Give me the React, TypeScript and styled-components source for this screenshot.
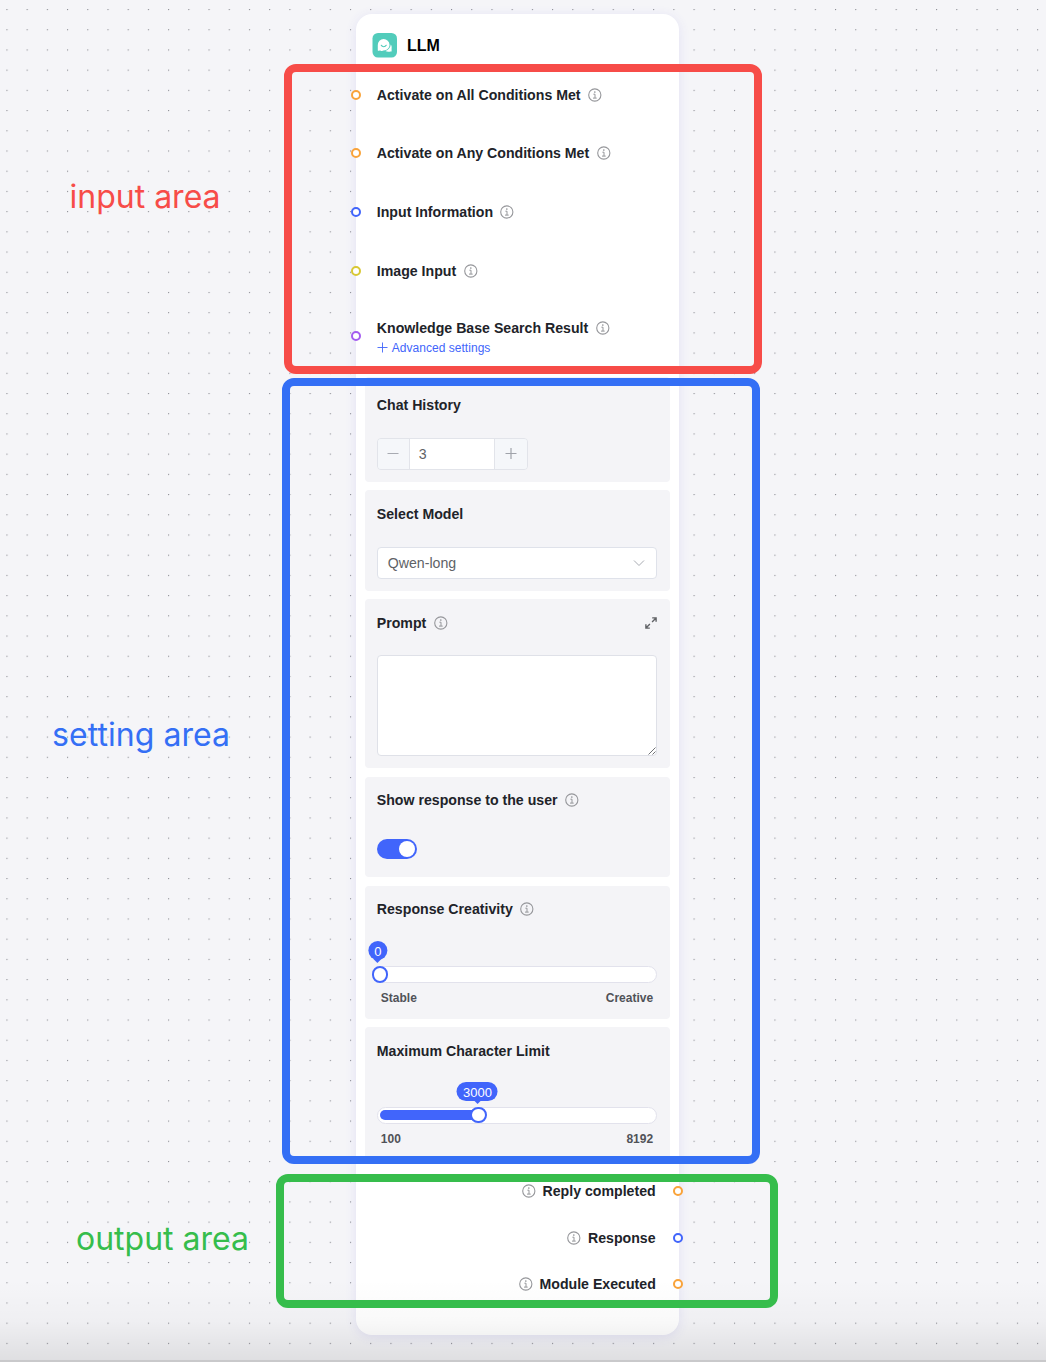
import React from "react";
import styled, { createGlobalStyle } from "styled-components";

const blue = "#4165fb";

const GlobalStyle = createGlobalStyle`
  * { box-sizing: border-box; }
  body { margin: 0; background: #f5f5f8; font-family: "Liberation Sans", Arial, sans-serif; }
`;

const Canvas = styled.main`
  position: relative;
  width: 1046px;
  height: 1362px;
  overflow: hidden;
  background: #f5f5f8;
  padding: 14px 0 0 356px;
`;

const Dots = styled.svg`
  position: absolute;
  inset: 0;
  width: 100%;
  height: 100%;
`;

const BottomShade = styled.div`
  position: absolute;
  left: 0;
  right: 0;
  bottom: 0;
  height: 82px;
  border-bottom: 2px solid #c9c9cb;
  background: linear-gradient(to bottom, rgba(0,0,0,0), rgba(0,0,0,0.025) 50%, rgba(0,0,0,0.09));
`;

const Node = styled.section`
  position: relative;
  width: 323px;
  height: 1321px;
  background: #fff;
  border-radius: 16px;
  box-shadow: 0 2px 12px rgba(85, 72, 220, 0.11);
  display: flex;
  flex-direction: column;
`;

const Header = styled.header`
  display: flex;
  align-items: center;
  gap: 10px;
  height: 63px;
  padding-left: 16px;
  font-size: 16px;
  font-weight: 700;
  color: #000;
`;

const Inputs = styled.div`
  height: 300px;
  padding-top: 5.4px;
`;

const InputRow = styled.div<{ $h?: number }>`
  display: flex;
  align-items: center;
  height: ${(p) => p.$h ?? 25}px;
  margin-bottom: 33.6px;
`;

const Port = styled.span<{ $color: string }>`
  flex: none;
  width: 10px;
  height: 10px;
  border: 2px solid ${(p) => p.$color};
  border-radius: 50%;
  background: #fff;
`;

const InPort = styled(Port)`
  margin-left: -4.6px;
  margin-right: 15.4px;
`;

const OutPort = styled(Port)`
  margin-left: 10px;
  margin-right: -4px;
`;

const Title = styled.div`
  display: flex;
  align-items: center;
  height: 20px;
  font-size: 14.15px;
  font-weight: 700;
  color: #212329;
  white-space: nowrap;
`;

const TitleText = styled.span<{ $w: number }>`
  width: ${(p) => p.$w}px;
`;

const Stack = styled.div`
  display: flex;
  flex-direction: column;
  padding-top: 3px;
`;

const Advanced = styled.a`
  display: flex;
  align-items: center;
  gap: 4px;
  height: 19px;
  font-size: 12px;
  letter-spacing: 0.03px;
  color: ${blue};
`;

const Settings = styled.div`
  display: flex;
  flex-direction: column;
  gap: 8.5px;
  padding: 0 9.5px 0 8.8px;
`;

const Card = styled.div<{ $h: number; $top?: number }>`
  height: ${(p) => p.$h}px;
  background: #f4f4f7;
  border-radius: 4px;
  padding: ${(p) => p.$top ?? 13.6}px 12.4px 0 12px;
`;

const Spread = styled.div`
  display: flex;
  align-items: center;
  justify-content: space-between;
`;

const Stepper = styled.div`
  display: grid;
  grid-template-columns: 31px 1fr 32px;
  width: 151px;
  height: 32px;
  margin-top: 22.5px;
  border: 1px solid #e2e4ea;
  border-radius: 4px;
  overflow: hidden;
`;

const StepButton = styled.button`
  display: flex;
  align-items: center;
  justify-content: center;
  padding: 0;
  border: 0;
  background: #f5f7fa;
`;

const StepValue = styled.div`
  border: solid #e2e4ea;
  border-width: 0 1px;
  background: #fff;
  padding-left: 9px;
  font-size: 14.15px;
  line-height: 31px;
  color: #606266;
`;

const Select = styled.div`
  display: flex;
  align-items: center;
  justify-content: space-between;
  height: 32.4px;
  margin-top: 23.2px;
  padding: 0 11px 0 10px;
  border: 1px solid #dfe2ea;
  border-radius: 4px;
  background: #fff;
  font-size: 14.15px;
  color: #606266;
`;

const PromptBox = styled.div`
  display: flex;
  align-items: flex-end;
  justify-content: flex-end;
  height: 101px;
  margin-top: 22.2px;
  border: 1px solid #dfe1e8;
  border-radius: 4px;
  background: #fff;
`;

const Toggle = styled.div`
  display: flex;
  align-items: center;
  justify-content: flex-end;
  width: 40.5px;
  height: 20.5px;
  margin-top: 29.3px;
  padding-right: 2px;
  border-radius: 11px;
  background: ${blue};
`;

const Knob = styled.span`
  width: 16.5px;
  height: 16.5px;
  border-radius: 50%;
  background: #fff;
`;

const Track = styled.div<{ $top: number }>`
  position: relative;
  height: 17px;
  margin-top: ${(p) => p.$top}px;
  border: 1px solid #e2e2ec;
  border-radius: 9px;
  background: #fff;
  padding: 2px;
`;

const Fill = styled.div`
  height: 10.5px;
  border-radius: 5px;
  background: ${blue};
`;

const Thumb = styled.span`
  position: absolute;
  top: -1px;
  width: 16.5px;
  height: 16.5px;
  margin-left: -7.8px;
  border: 2px solid ${blue};
  border-radius: 50%;
  background: #fff;
`;

const Bubble = styled.span`
  position: absolute;
  top: -26px;
  transform: translateX(-50%);
  height: 19px;
  padding: 1px 6px 0;
  border-radius: 10px;
  background: ${blue};
  color: #fff;
  font-size: 13px;
  line-height: 19px;
  &::after {
    content: "";
    position: absolute;
    left: 50%;
    bottom: -3px;
    margin-left: -4px;
    border: 4px solid transparent;
    border-top-color: ${blue};
    border-bottom: 0;
  }
`;

const Scale = styled.div`
  display: flex;
  justify-content: space-between;
  padding: 8px 4px 0;
  font-size: 12px;
  line-height: 15px;
  font-weight: 700;
  color: #505258;
`;

const Outputs = styled.div`
  display: flex;
  flex-direction: column;
  gap: 26.4px;
  padding-top: 20.4px;
`;

const OutputRow = styled.div`
  display: flex;
  align-items: center;
  justify-content: flex-end;
  gap: 7px;
  height: 20px;
  font-size: 14.15px;
  font-weight: 700;
  color: #212329;
`;

const OutputLabel = styled.span<{ $w: number }>`
  width: ${(p) => p.$w}px;
  white-space: nowrap;
`;

const Region = styled.div<{ $x: number; $y: number; $w: number; $h: number; $color: string }>`
  position: absolute;
  left: ${(p) => p.$x}px;
  top: ${(p) => p.$y}px;
  width: ${(p) => p.$w}px;
  height: ${(p) => p.$h}px;
  border: 8px solid ${(p) => p.$color};
  border-radius: 12px;
`;

const Note = styled.div<{ $x: number; $y: number; $color: string; $ls: number }>`
  position: absolute;
  left: ${(p) => p.$x}px;
  top: ${(p) => p.$y}px;
  font-family: Inter, "Noto Sans", sans-serif;
  font-size: 32px;
  line-height: 40px;
  letter-spacing: ${(p) => p.$ls}px;
  white-space: nowrap;
  color: ${(p) => p.$color};
`;

const Info = () => (
  <svg width="14" height="14" viewBox="0 0 14 14" fill="none" stroke="#96979b">
    <circle cx="6.8" cy="7" r="6.1" strokeWidth="1.1" />
    <path d="M5.4 6.2h1.6v3.9M5 10.1h3.7" strokeWidth="1" />
    <circle cx="6.8" cy="4" r="0.85" fill="#96979b" stroke="none" />
  </svg>
);

const Logo = () => (
  <svg width="25" height="25" viewBox="0 0 25 25">
    <rect x="0.5" width="24.5" height="24.5" rx="5.5" fill="#52ccbb" />
    <path
      d="M5.8 17.6V12A5.9 5.9 0 0 1 11.6 6a5.9 5.9 0 0 1 5.9 5.8c0 3.3-2.6 5.7-5.6 5.7-.9 0-1.5.6-2.3.6-.9 0-1.1-.6-1.9-.5-.8 0-1.3.6-1.9 0z"
      fill="#fff"
    />
    <path
      d="M18.8 11.6c1 1.3 1 2.8.8 4v2.6c0 .5-.6.5-1 .3-.5-.3-.9.2-1.5.2-1.4.1-2.7-.1-3.7-.7 3-.8 5-3.2 5.4-6.4z"
      fill="#fff"
    />
    <path d="M9.3 12.3c1 1.9 3.8 1.9 4.9 0" fill="none" stroke="#52ccbb" strokeWidth="1.2" strokeLinecap="round" />
  </svg>
);

type Item = { text: string; w: number; color: string };

const inputs: Item[] = [
  { text: "Activate on All Conditions Met", w: 203.5, color: "#f9a33a" },
  { text: "Activate on Any Conditions Met", w: 212.5, color: "#f9a33a" },
  { text: "Input Information", w: 116, color: blue },
  { text: "Image Input", w: 79.5, color: "#d8c834" },
];

const outputs: Item[] = [
  { text: "Reply completed", w: 113.5, color: "#f9a33a" },
  { text: "Response", w: 68, color: blue },
  { text: "Module Executed", w: 116.5, color: "#f9a33a" },
];

const Label = ({ text, w, info = true }: { text: string; w: number; info?: boolean }) => (
  <Title>
    <TitleText $w={w + 7.4}>{text}</TitleText>
    {info && <Info />}
  </Title>
);

const Slider = ({ at, value, bubbleAt, low, high, filled, top }: {
  at: number; value: string; bubbleAt: number; low: string; high: string; filled?: boolean; top: number;
}) => (
  <>
    <Track $top={top}>
      {filled && <Fill style={{ width: at }} />}
      <Thumb style={{ left: at }} />
      <Bubble style={{ left: bubbleAt }}>{value}</Bubble>
    </Track>
    <Scale><span>{low}</span><span>{high}</span></Scale>
  </>
);

export default function App() {
  return (
    <>
      <GlobalStyle />
      <Canvas>
        <Dots>
          <defs>
            <pattern id="dots" x="6.4" y="9" width="20.21" height="20.21" patternUnits="userSpaceOnUse">
              <circle cx="0.6" cy="0.6" r="0.6" fill="#74757c" />
            </pattern>
          </defs>
          <rect width="100%" height="100%" fill="url(#dots)" />
        </Dots>
        <Node>
          <Header><Logo />LLM</Header>
          <Inputs>
            {inputs.map((i) => (
              <InputRow key={i.text}>
                <InPort $color={i.color} />
                <Label text={i.text} w={i.w} />
              </InputRow>
            ))}
            <InputRow $h={39}>
              <InPort $color="#a45cf0" />
              <Stack>
                <Label text="Knowledge Base Search Result" w={211.5} />
                <Advanced>
                  <svg width="11" height="11" viewBox="0 0 11 11" stroke={blue} strokeWidth="0.9">
                    <path d="M5.5 .5v10M.5 5.5h10" />
                  </svg>
                  Advanced settings
                </Advanced>
              </Stack>
            </InputRow>
          </Inputs>
          <Settings>
            <Card $h={104.5} $top={18}>
              <Label text="Chat History" w={84} info={false} />
              <Stepper>
                <StepButton>
                  <svg width="12" height="12" stroke="#a8abb2" strokeWidth="1.2"><path d="M.5 5.5h11" /></svg>
                </StepButton>
                <StepValue>3</StepValue>
                <StepButton>
                  <svg width="12" height="12" stroke="#a0a3aa" strokeWidth="1.2"><path d="M.5 5.5h11M6 0v11" /></svg>
                </StepButton>
              </Stepper>
            </Card>
            <Card $h={100.5}>
              <Label text="Select Model" w={86} info={false} />
              <Select>
                Qwen-long
                <svg width="12" height="8" fill="none" stroke="#a8abb2"><path d="M1 1.5l5 5 5-5" /></svg>
              </Select>
            </Card>
            <Card $h={169}>
              <Spread>
                <Label text="Prompt" w={49.5} />
                <svg width="12" height="12" viewBox="0 0 12 12" fill="none" stroke="#606266" strokeWidth="1.4">
                  <path d="M7.2 .9h3.9v3.9M11 1L7.1 4.9M4.8 11.1H.9V7.2M1 11l3.9-3.9" />
                </svg>
              </Spread>
              <PromptBox>
                <svg width="8" height="8" stroke="#606266" strokeWidth="0.9"><path d="M.5 7.5l7-7M4.5 7.5l3-3" /></svg>
              </PromptBox>
            </Card>
            <Card $h={100.5} $top={13}>
              <Label text="Show response to the user" w={181} />
              <Toggle><Knob /></Toggle>
            </Card>
            <Card $h={133} $top={13}>
              <Label text="Response Creativity" w={135.5} />
              <Slider at={1.5} bubbleAt={0} value="0" low="Stable" high="Creative" top={47.5} />
            </Card>
            <Card $h={134}>
              <Label text="Maximum Character Limit" w={174} info={false} />
              <Slider at={100} bubbleAt={99.7} value="3000" low="100" high="8192" filled top={46.4} />
            </Card>
          </Settings>
          <Outputs>
            {outputs.map((o) => (
              <OutputRow key={o.text}>
                <Info />
                <OutputLabel $w={o.w}>{o.text}</OutputLabel>
                <OutPort $color={o.color} />
              </OutputRow>
            ))}
          </Outputs>
        </Node>
        <BottomShade />
        <Region $x={284} $y={64} $w={478} $h={310} $color="#f74c48" />
        <Region $x={282} $y={378} $w={478} $h={786} $color="#346ff5" />
        <Region $x={276} $y={1174} $w={502} $h={134} $color="#36bd4c" />
        <Note $x={69.5} $y={177} $color="#f74c48" $ls={0}>input area</Note>
        <Note $x={52} $y={715} $color="#346ff5" $ls={0.06}>setting area</Note>
        <Note $x={76} $y={1219} $color="#36bd4c" $ls={0}>output area</Note>
      </Canvas>
    </>
  );
}
